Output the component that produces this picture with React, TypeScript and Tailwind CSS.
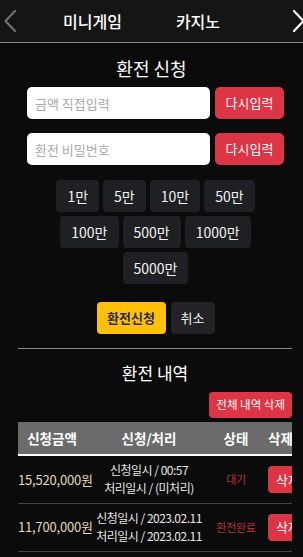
import React from 'react';

const amountRows = [
  ['1만', '5만', '10만', '50만'],
  ['100만', '500만', '1000만'],
  ['5000만'],
];

const history = [
  { amount: '15,520,000원', req: '신청일시 / 00:57', done: '처리일시 / (미처리)', status: '대기' },
  { amount: '11,700,000원', req: '신청일시 / 2023.02.11', done: '처리일시 / 2023.02.11', status: '환전완료' },
];

const Chevron = ({ dir, color }: { dir: 'left' | 'right'; color: string }) => (
  <svg width="12" height="22" viewBox="0 0 12 22" fill="none">
    <polyline
      points={dir === 'left' ? '11,1 1.5,11 11,21' : '1,1 10.5,11 1,21'}
      stroke={color}
      strokeWidth="2.2"
      strokeLinecap="round"
      strokeLinejoin="round"
    />
  </svg>
);

export default function App() {
  return (
    <div
      className="w-[303px] h-[557px] overflow-hidden bg-[#0b0b0b] text-white"
      style={{ fontFamily: '"Noto Sans CJK KR", "Noto Sans", sans-serif' }}
    >
      {/* Top tab bar */}
      <div className="h-[43px] bg-[#151515] border-b border-[#8a8a8a] flex items-center pl-[4px] overflow-hidden">
        <Chevron dir="left" color="#6f6f6f" />
        <span className="ml-[47px] text-[16px] font-medium leading-none">미니게임</span>
        <span className="ml-[54px] text-[16px] font-medium leading-none">카지노</span>
        <div className="ml-auto w-[10px] overflow-hidden shrink-0">
          <Chevron dir="right" color="#ffffff" />
        </div>
      </div>

      {/* Exchange request */}
      <h2 className="mt-[12px] text-center text-[18px] leading-[26px] font-normal">환전 신청</h2>

      <div className="ml-[27px] w-[257px]">
        <div className="mt-[6px] flex gap-[5px]">
          <input
            placeholder="금액 직접입력"
            className="w-[183px] h-[32px] rounded-[5px] bg-white px-[8px] text-[13px] text-black placeholder:text-[#a9a9a9] outline-none"
          />
          <button className="w-[69px] h-[32px] rounded-[5px] bg-[#dc3545] text-[13px] text-white">다시입력</button>
        </div>
        <div className="mt-[14px] flex gap-[5px]">
          <input
            placeholder="환전 비밀번호"
            className="w-[183px] h-[32px] rounded-[5px] bg-white px-[8px] text-[13px] text-black placeholder:text-[#a9a9a9] outline-none"
          />
          <button className="w-[69px] h-[32px] rounded-[5px] bg-[#dc3545] text-[13px] text-white">다시입력</button>
        </div>

        <div className="mt-[15px] flex flex-col gap-[4px]">
          {amountRows.map((row, i) => (
            <div key={i} className="flex justify-center gap-[4px]">
              {row.map(a => (
                <button
                  key={a}
                  className="h-[32px] px-[11px] rounded-[4px] bg-[#1f2023] text-[14px] text-[#f2f2f2]"
                >
                  {a}
                </button>
              ))}
            </div>
          ))}
        </div>

        <div className="mt-[18px] flex justify-center gap-[5px]">
          <button className="h-[32px] w-[69px] rounded-[4px] bg-[#ffc107] text-[13px] font-bold text-[#2b2a5c]">환전신청</button>
          <button className="h-[32px] w-[44px] rounded-[4px] bg-[#222326] text-[13px] text-[#f2f2f2]">취소</button>
        </div>
      </div>

      {/* History */}
      <div className="ml-[18px] w-[274px]">
        <div className="mt-[14px] h-px bg-[#8a8a8a]" />
        <h2 className="mt-[11px] text-center text-[17px] leading-[26px] font-normal">환전 내역</h2>
        <div className="mt-[6px] flex justify-end">
          <button className="h-[26px] px-[7px] rounded-[4px] bg-[#dc3545] text-[11.5px] text-white">전체 내역 삭제</button>
        </div>

        <div className="mt-[4px] overflow-hidden">
          <table className="w-[310px] table-fixed border-collapse">
            <colgroup>
              <col className="w-[68px]" />
              <col className="w-[126px]" />
              <col className="w-[48px]" />
              <col className="w-[68px]" />
            </colgroup>
            <thead>
              <tr className="h-[33px] bg-[#6b6b6b] border-b-2 border-white text-[13.5px] font-bold">
                <th className="font-bold">신청금액</th>
                <th className="font-bold">신청/처리</th>
                <th className="font-bold">상태</th>
                <th className="font-bold text-left pl-[8px]">삭제</th>
              </tr>
            </thead>
            <tbody>
              {history.map(h => (
                <tr key={h.amount} className="h-[48px] border-b border-[#444]">
                  <td className="text-center text-[13px] tracking-[-0.2px] text-[#e2d8bd] whitespace-nowrap">{h.amount}</td>
                  <td className="text-center text-[12px] tracking-[-0.5px] leading-[18px] text-[#e6e6e6] whitespace-nowrap">
                    <div>{h.req}</div>
                    <div>{h.done}</div>
                  </td>
                  <td className="text-center text-[11px] tracking-[-0.3px] text-[#b8323c] whitespace-nowrap">{h.status}</td>
                  <td className="pl-[8px]">
                    <button className="h-[27px] px-[8px] rounded-[4px] bg-[#dc3545] text-[13px] text-white">삭제</button>
                  </td>
                </tr>
              ))}
            </tbody>
          </table>
        </div>
      </div>
    </div>
  );
}
